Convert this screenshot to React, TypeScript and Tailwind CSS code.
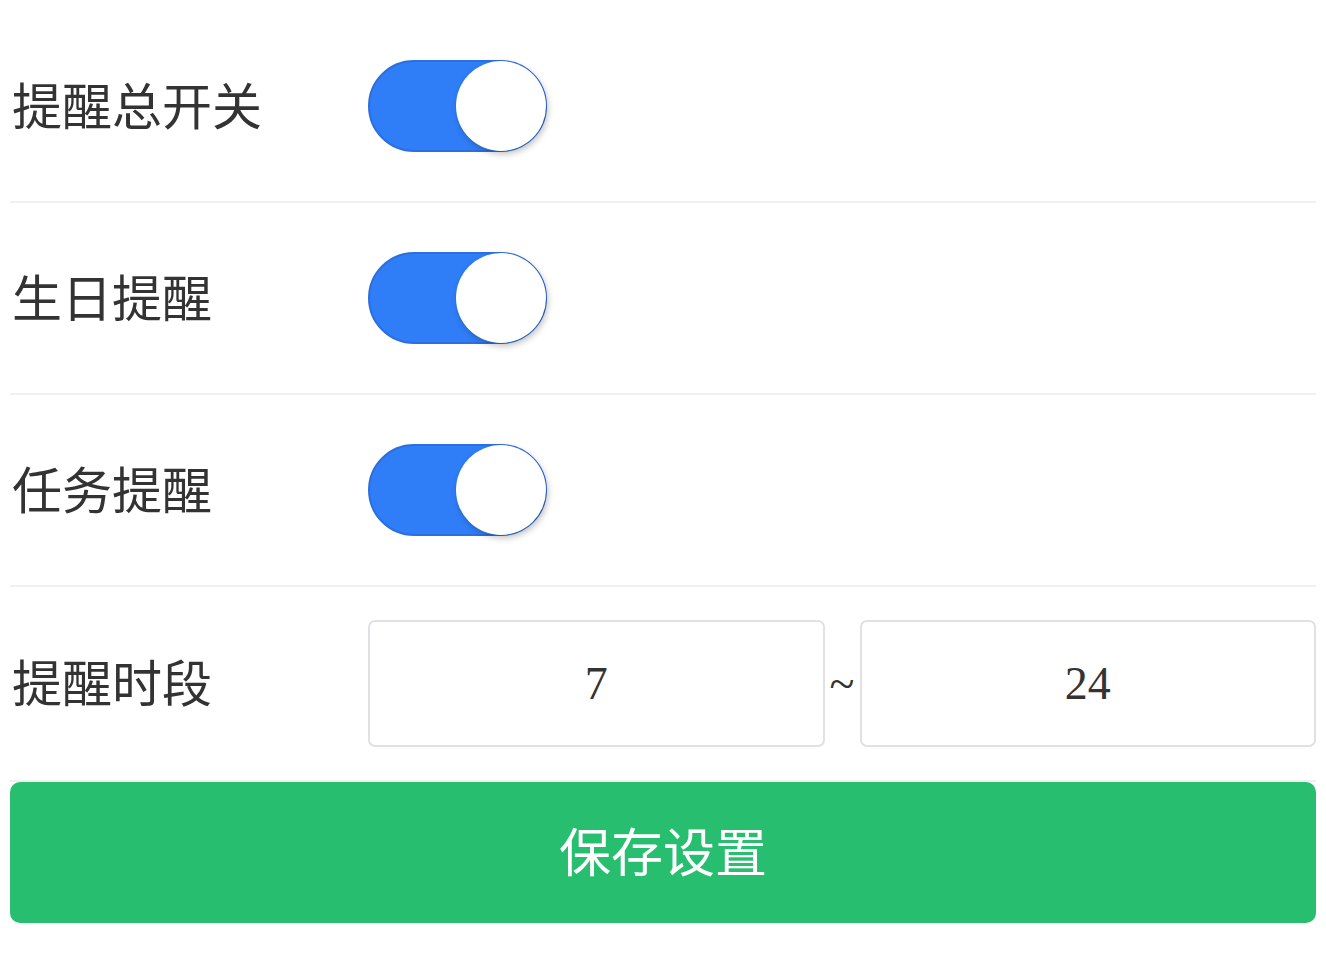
import { useState } from 'react';

const font = { fontFamily: '"Liberation Serif", "Noto Sans CJK SC", serif' };

function Toggle({ on, onChange }: { on: boolean; onChange: () => void }) {
  return (
    <button
      onClick={onChange}
      className={`relative h-[92px] w-[179px] shrink-0 rounded-full border-2 transition ${
        on ? 'border-[#2c6fe0] bg-[#2f7df7]' : 'border-[#dcdfe6] bg-white'
      }`}
    >
      <span
        className={`absolute top-[-1px] h-[90px] w-[90px] rounded-full bg-white shadow-[2px_3px_6px_rgba(0,0,0,0.25)] transition-all ${
          on ? 'left-[86px]' : 'left-[-1px]'
        }`}
      />
    </button>
  );
}

export default function App() {
  const [all, setAll] = useState(true);
  const [birthday, setBirthday] = useState(true);
  const [task, setTask] = useState(true);
  const [from, setFrom] = useState('7');
  const [to, setTo] = useState('24');

  const rows = [
    { label: '提醒总开关', on: all, set: () => setAll(!all) },
    { label: '生日提醒', on: birthday, set: () => setBirthday(!birthday) },
    { label: '任务提醒', on: task, set: () => setTask(!task) },
  ];

  return (
    <div className="min-h-screen bg-white px-[10px] pt-[11px] text-[#333]" style={font}>
      {rows.map((r) => (
        <div key={r.label} className="flex h-[192px] items-center border-b-2 border-[#f0f0f2]">
          <div className="w-[358px] shrink-0 pl-[2px] pt-[3px] text-[50px] leading-none">{r.label}</div>
          <Toggle on={r.on} onChange={r.set} />
        </div>
      ))}

      {/* 提醒时段 */}
      <div className="flex h-[195px] items-center border-b-2 border-[#f0f0f2]">
        <div className="w-[358px] shrink-0 pl-[2px] pt-[3px] text-[50px] leading-none">提醒时段</div>
        <div className="flex min-w-0 flex-1 items-center">
          <input
            value={from}
            onChange={(e) => setFrom(e.target.value)}
            className="h-[127px] w-0 min-w-0 flex-1 rounded-[7px] border-2 border-[#dfe1e6] text-center text-[46px] text-[#333] outline-none"
            style={font}
          />
          <span className="w-[35px] shrink-0 text-center text-[46px] leading-none">~</span>
          <input
            value={to}
            onChange={(e) => setTo(e.target.value)}
            className="h-[127px] w-0 min-w-0 flex-1 rounded-[7px] border-2 border-[#dfe1e6] text-center text-[46px] text-[#333] outline-none"
            style={font}
          />
        </div>
      </div>

      <button className="h-[141px] w-full rounded-[10px] bg-[#27bf6f] pt-[4px] text-[52px] text-white" style={font}>
        保存设置
      </button>
    </div>
  );
}
